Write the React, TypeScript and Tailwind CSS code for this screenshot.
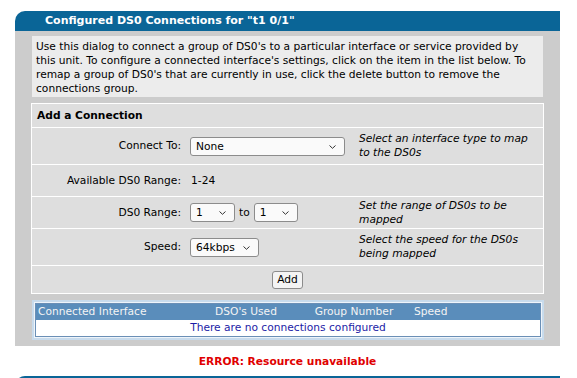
import React from "react";

function Chevron() {
  return (
    <svg className="pointer-events-none absolute right-[9px] top-[8px]" width="7" height="4" viewBox="0 0 7 4" fill="none">
      <polyline points="0.5,0.5 3.5,3.3 6.5,0.5" stroke="#333" strokeWidth="1" />
    </svg>
  );
}

function Select({ value, width }: { value: string; width: string }) {
  return (
    <div className={`relative ${width}`}>
      <select
        defaultValue={value}
        className="h-[19px] w-full appearance-none rounded-[3px] border border-[#8c8c8c] bg-[#fafafa] pl-[5px] text-[8pt] leading-[17px] text-black outline-none"
      >
        <option>{value}</option>
      </select>
      <Chevron />
    </div>
  );
}

function Row({
  label,
  children,
  help,
  tall,
}: {
  label: string;
  children: React.ReactNode;
  help?: string[];
  tall?: boolean;
}) {
  return (
    <div className={`flex items-center border-b border-white ${tall ? "h-[37px]" : "h-[32px]"}`}>
      <div className="w-[154px] pr-[5px] text-right">{label}</div>
      <div className="flex w-[173px] items-center pl-[4px]">{children}</div>
      {help && (
        <div className="italic leading-[14px]">
          {help.map((l) => (
            <div key={l}>{l}</div>
          ))}
        </div>
      )}
    </div>
  );
}

export default function App() {
  return (
    <div className="h-[378px] w-[577px] overflow-hidden bg-white font-['DejaVu_Sans',Verdana,sans-serif] text-[8pt] text-black">
      <div className="ml-[15px] w-[545px] pt-[11px]">
        {/* panel header */}
        <div className="h-[20px] rounded-tl-[10px] bg-[#0a6597] pl-[30px] text-[11px] font-bold leading-[20px] text-white">
          Configured DS0 Connections for "t1 0/1"
        </div>

        <div className="h-[315px] bg-[#cccccc] pt-[5px]">
          {/* description */}
          <div className="ml-[17px] h-[61px] w-[511px] bg-[#ececec] pl-[4px] pr-[6px] pt-[4px] leading-[14px]">
            Use this dialog to connect a group of DS0's to a particular interface or service provided by
            this unit. To configure a connected interface's settings, click on the item in the list below. To
            remap a group of DS0's that are currently in use, click the delete button to remove the
            connections group.
          </div>

          {/* add a connection */}
          <div className="ml-[16px] mt-[6px] w-[513px] border border-white bg-[#dedede]">
            <div className="h-[24px] border-b border-white pl-[5px] font-bold leading-[23px]">Add a Connection</div>

            <Row label="Connect To:" tall help={["Select an interface type to map", "to the DS0s"]}>
              <Select value="None" width="w-[155px]" />
            </Row>

            <Row label="Available DS0 Range:">
              <span className="pl-[1px]">1-24</span>
            </Row>

            <Row label="DS0 Range:" help={["Set the range of DS0s to be", "mapped"]}>
              <Select value="1" width="w-[45px]" />
              <span className="px-[4px]">to</span>
              <Select value="1" width="w-[44px]" />
            </Row>

            <Row label="Speed:" tall help={["Select the speed for the DS0s", "being mapped"]}>
              <Select value="64kbps" width="w-[69px]" />
            </Row>

            <div className="flex h-[27px] items-center justify-center">
              <button className="h-[18px] w-[31px] rounded-[3px] border border-[#8c8c8c] bg-[#f4f4f4] text-[8pt] leading-[16px] text-black">
                Add
              </button>
            </div>
          </div>

          {/* connections table */}
          <div className="ml-[17px] mt-[6px] w-[512px] border-2 border-[#c8dbec] bg-[#eef4fa] p-px">
            <div className="border border-[#6a8fb6]">
              <div className="flex h-[16px] items-center bg-[#5a8dbb] leading-[16px] text-[#f4f4f4]">
                <div className="w-[160px] pl-[2px]">Connected Interface</div>
                <div className="w-[100px] text-center">DSO's Used</div>
                <div className="w-[116px] text-center">Group Number</div>
                <div className="pl-[2px]">Speed</div>
              </div>
              <div className="h-[16px] bg-white text-center leading-[16px] text-[#1c1ca6]">
                There are no connections configured
              </div>
            </div>
          </div>
        </div>

        {/* status */}
        <div className="h-[30px] pt-[9px] text-center font-bold leading-[14px] text-[#e00000]">
          ERROR: Resource unavailable
        </div>

        {/* next panel header */}
        <div className="h-[20px] rounded-tl-[10px] bg-[#0a6597]" />
      </div>
    </div>
  );
}
